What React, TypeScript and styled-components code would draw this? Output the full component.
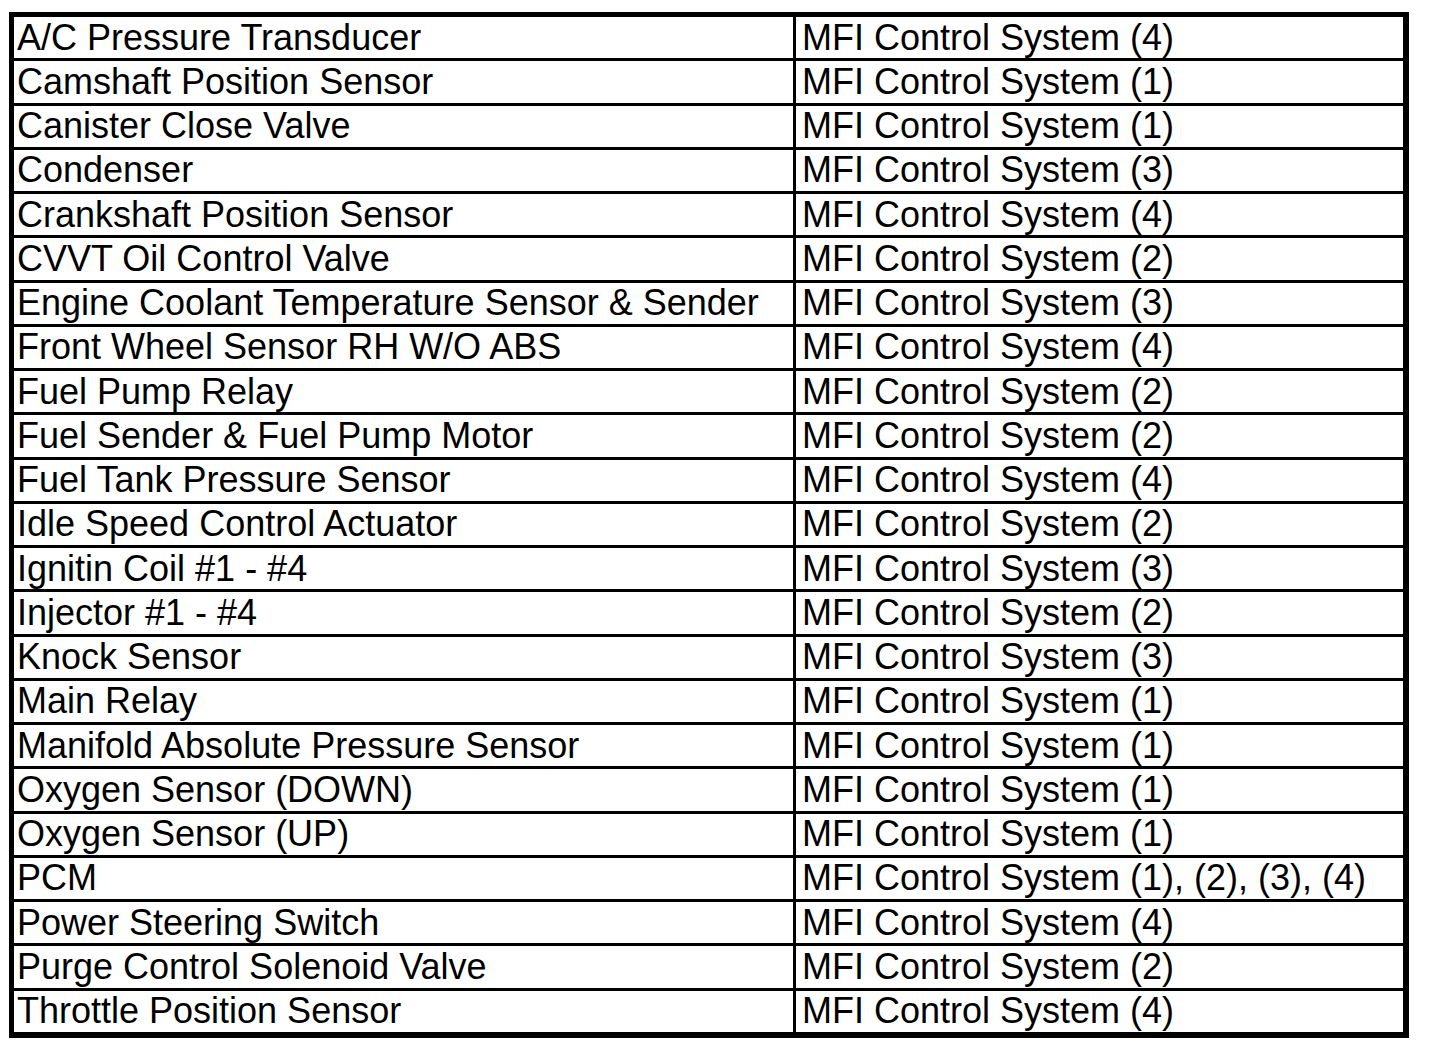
import styled, { createGlobalStyle } from "styled-components";

const GlobalStyle = createGlobalStyle`
  html, body {
    margin: 0;
    padding: 0;
    background: #ffffff;
  }
`;

const Page = styled.div`
  padding: 12px 0 0 9px;
`;

const Table = styled.div`
  display: grid;
  grid-template-columns: 779px 607px;
  grid-auto-rows: 41.26px;
  gap: 3px;
  width: 1389px;
  padding: 5px 6px 6px 5px;
  background: #000000;
  font-family: "Liberation Sans", Arial, sans-serif;
  font-size: 36px;
  color: #000000;
`;

const Cell = styled.div<{ $right?: boolean }>`
  background: #ffffff;
  display: flex;
  align-items: center;
  padding-left: ${(p) => (p.$right ? "6px" : "3px")};
  white-space: nowrap;
  overflow: hidden;
  line-height: 1;
`;

const rows: [string, string][] = [
  ["A/C Pressure Transducer", "MFI Control System (4)"],
  ["Camshaft Position Sensor", "MFI Control System (1)"],
  ["Canister Close Valve", "MFI Control System (1)"],
  ["Condenser", "MFI Control System (3)"],
  ["Crankshaft Position Sensor", "MFI Control System (4)"],
  ["CVVT Oil Control Valve", "MFI Control System (2)"],
  ["Engine Coolant Temperature Sensor & Sender", "MFI Control System (3)"],
  ["Front Wheel Sensor RH W/O ABS", "MFI Control System (4)"],
  ["Fuel Pump Relay", "MFI Control System (2)"],
  ["Fuel Sender & Fuel Pump Motor", "MFI Control System (2)"],
  ["Fuel Tank Pressure Sensor", "MFI Control System (4)"],
  ["Idle Speed Control Actuator", "MFI Control System (2)"],
  ["Ignitin Coil #1 - #4", "MFI Control System (3)"],
  ["Injector #1 - #4", "MFI Control System (2)"],
  ["Knock Sensor", "MFI Control System (3)"],
  ["Main Relay", "MFI Control System (1)"],
  ["Manifold Absolute Pressure Sensor", "MFI Control System (1)"],
  ["Oxygen Sensor (DOWN)", "MFI Control System (1)"],
  ["Oxygen Sensor (UP)", "MFI Control System (1)"],
  ["PCM", "MFI Control System (1), (2), (3), (4)"],
  ["Power Steering Switch", "MFI Control System (4)"],
  ["Purge Control Solenoid Valve", "MFI Control System (2)"],
  ["Throttle Position Sensor", "MFI Control System (4)"],
];

const App = () => {
  return (
    <>
      <GlobalStyle />
      <Page>
        <Table>
          {rows.map(([component, system]) => [
            <Cell key={component}>{component}</Cell>,
            <Cell key={component + "-sys"} $right>
              {system}
            </Cell>,
          ])}
        </Table>
      </Page>
    </>
  );
};

export default App;
